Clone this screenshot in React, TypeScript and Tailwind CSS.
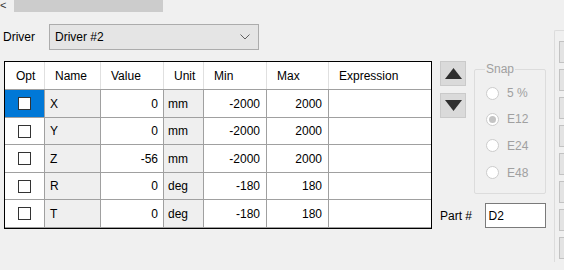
import React from "react";

type Col = {
  key: string;
  label: string;
  width: string;
  head: string;
  cell: string;
};

const cols: Col[] = [
  { key: "opt", label: "Opt", width: "w-[40px]", head: "pl-[11px]", cell: "justify-center" },
  { key: "name", label: "Name", width: "w-[56px]", head: "pl-[10px]", cell: "pl-[5px] bg-[#efefef]" },
  { key: "value", label: "Value", width: "w-[63px]", head: "pl-[10px]", cell: "justify-end pr-[5px] bg-white" },
  { key: "unit", label: "Unit", width: "w-[40px]", head: "pl-[10px]", cell: "pl-[4px] bg-[#efefef]" },
  { key: "min", label: "Min", width: "w-[63px]", head: "pl-[10px]", cell: "justify-end pr-[6px] bg-white" },
  { key: "max", label: "Max", width: "w-[62px]", head: "pl-[10px]", cell: "justify-end pr-[6px] bg-white" },
  { key: "expr", label: "Expression", width: "w-[102px]", head: "pl-[10px]", cell: "bg-white" },
];

const rows = [
  { name: "X", value: "0", unit: "mm", min: "-2000", max: "2000", h: "h-[28px]" },
  { name: "Y", value: "0", unit: "mm", min: "-2000", max: "2000", h: "h-[27px]" },
  { name: "Z", value: "-56", unit: "mm", min: "-2000", max: "2000", h: "h-[28px]" },
  { name: "R", value: "0", unit: "deg", min: "-180", max: "180", h: "h-[27px]" },
  { name: "T", value: "0", unit: "deg", min: "-180", max: "180", h: "h-[28px]" },
];

const snaps = [
  { label: "5 %", checked: false, h: "h-[26px]" },
  { label: "E12", checked: true, h: "h-[26px]" },
  { label: "E24", checked: false, h: "h-[27px]" },
  { label: "E48", checked: false, h: "h-[27px]" },
];

function CheckBox() {
  return <div className="h-[13px] w-[13px] border border-[#333333] bg-white" />;
}

function Radio({ checked }: { checked: boolean }) {
  return (
    <div className="flex h-[13px] w-[13px] items-center justify-center rounded-full border border-[#cccccc] bg-white">
      {checked && <div className="h-[7px] w-[7px] rounded-full bg-[#c4c4c4]" />}
    </div>
  );
}

function ArrowButton({ up }: { up?: boolean }) {
  return (
    <button className="flex h-[25px] w-[26px] items-center justify-center border border-[#cacaca] bg-[#dadada]">
      <svg width="17" height="11" viewBox="0 0 17 11">
        {up ? (
          <polygon points="8.5,0 17,11 0,11" fill="#2f2f2f" />
        ) : (
          <polygon points="0,0 17,0 8.5,11" fill="#2f2f2f" />
        )}
      </svg>
    </button>
  );
}

export default function App() {
  return (
    <div
      className="flex h-[270px] w-[564px] overflow-hidden bg-[#f0f0f0] text-[12px] text-black"
      style={{ fontFamily: '"Liberation Sans", Arial, sans-serif' }}
    >
      {/* left side */}
      <div className="flex w-[554px] shrink-0 flex-col">
        <div className="flex h-[12px] items-start">
          <span className="w-[14px] text-[11px] leading-[11px] text-[#333333]">&lt;</span>
          <div className="h-[12px] w-[149px] bg-[#cccccc]" />
        </div>

        <div className="mt-[12px] flex h-[26px] items-center">
          <span className="w-[49px] pl-[3px]">Driver</span>
          <div className="flex h-[26px] w-[210px] items-center justify-between border border-[#acacac] bg-[#e5e5e5] pl-[5px] pr-[8px]">
            <span>Driver #2</span>
            <svg width="10" height="6" viewBox="0 0 10 6">
              <polyline points="0.5,0.5 5,5 9.5,0.5" fill="none" stroke="#606060" strokeWidth="1" />
            </svg>
          </div>
        </div>

        <div className="mt-[11px] flex">
          {/* grid */}
          <div className="ml-[4px] w-[428px] border border-black bg-white">
            <div className="flex h-[28px] border-b border-[#a0a0a0] bg-white">
              {cols.map((c, i) => (
                <div
                  key={c.key}
                  className={`flex items-center ${c.width} ${c.head} ${i < cols.length - 1 ? "border-r border-[#e0e0e0]" : ""}`}
                >
                  {c.label}
                </div>
              ))}
            </div>
            {rows.map((r, ri) => (
              <div key={r.name} className={`flex ${r.h} border-b border-[#a0a0a0]`}>
                {cols.map((c, i) => {
                  const sel = ri === 0 && c.key === "opt";
                  const text =
                    c.key === "name" ? r.name
                    : c.key === "value" ? r.value
                    : c.key === "unit" ? r.unit
                    : c.key === "min" ? r.min
                    : c.key === "max" ? r.max
                    : "";
                  return (
                    <div
                      key={c.key}
                      className={`flex items-center ${c.width} ${c.cell} ${sel ? "bg-[#0078d7]" : ""} ${i < cols.length - 1 ? "border-r border-[#a0a0a0]" : ""}`}
                    >
                      {c.key === "opt" ? <CheckBox /> : text}
                    </div>
                  );
                })}
              </div>
            ))}
          </div>

          {/* controls */}
          <div className="ml-[8px] flex w-[106px] flex-col">
            <div className="flex">
              <div className="flex w-[26px] flex-col gap-[7px]">
                <ArrowButton up />
                <ArrowButton />
              </div>
              <fieldset className="ml-[8px] mt-[1px] h-[132px] w-[73px] rounded-[2px] border border-[#dcdcdc] pl-[11px]">
                <legend className="-ml-[1px] px-[1px] leading-[14px] text-[#a0a0a0]">Snap</legend>
                <div className="flex flex-col pt-[4px]">
                  {snaps.map((s) => (
                    <div key={s.label} className={`flex ${s.h} items-center`}>
                      <Radio checked={s.checked} />
                      <span className="ml-[8px] text-[#a0a0a0]">{s.label}</span>
                    </div>
                  ))}
                </div>
              </fieldset>
            </div>
            <div className="mt-[9px] flex items-center">
              <span className="w-[45px]">Part #</span>
              <div className="flex h-[25px] w-[62px] items-center border border-[#7a7a7a] bg-white pl-[3px]">D2</div>
            </div>
          </div>
        </div>
      </div>

      {/* right button panel, cut off by the window edge */}
      <div className="mt-[30px] h-[232px] w-[24px] shrink-0 rounded-tl-[2px] border-l border-t border-[#dcdcdc] pl-[4px] pt-[10px]">
        <div className="flex flex-col gap-[6px]">
          {[0, 1, 2, 3, 4, 5, 6, 7].map((n) => (
            <div key={n} className="h-[22px] w-[20px] border border-[#c2c2c2] bg-[#e3e3e3]" />
          ))}
        </div>
      </div>
    </div>
  );
}
